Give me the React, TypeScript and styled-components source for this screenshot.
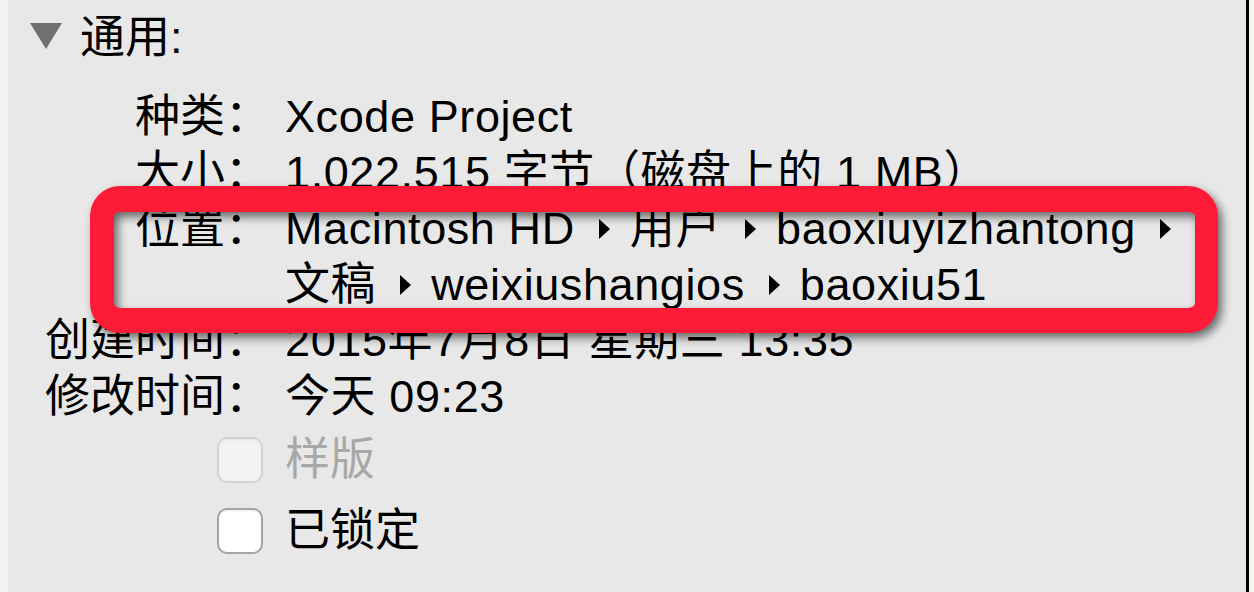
import React from "react";
import styled, { createGlobalStyle } from "styled-components";

const Global = createGlobalStyle`
  html, body { margin: 0; padding: 0; }
  body {
    background: #f4f4f1;
    width: 1254px;
    height: 592px;
    overflow: hidden;
    font-family: "Liberation Sans", "Noto Sans CJK SC", Arial, sans-serif;
  }
`;

const Page = styled.div`
  display: flex;
  width: 1254px;
  height: 592px;
  padding-left: 8px;
  box-sizing: border-box;
`;

const Panel = styled.div`
  position: relative;
  width: 1241px;
  height: 592px;
  background: #e8e8e8;
  border-right: 3px solid #000;
  box-sizing: border-box;
  padding-top: 10px;
  display: flex;
  flex-direction: column;
  color: #000;
  font-size: 45px;
  line-height: 56px;
`;

const Header = styled.div`
  display: flex;
  align-items: center;
  height: 56px;
  padding-left: 22px;
  gap: 18px;
`;

const Disclosure = styled.span`
  width: 0;
  height: 0;
  border-left: 16px solid transparent;
  border-right: 16px solid transparent;
  border-top: 26px solid #707070;
  margin-top: -4px;
`;

const Info = styled.div`
  display: grid;
  grid-template-columns: 262px auto;
  column-gap: 15px;
  margin-top: 23px;
`;

const Label = styled.div`
  text-align: right;
  white-space: nowrap;
`;

const Value = styled.div`
  white-space: nowrap;
  letter-spacing: 0.6px;
`;

const Crumb = styled.span`
  display: inline-block;
  width: 0;
  height: 0;
  border-top: 10px solid transparent;
  border-bottom: 10px solid transparent;
  border-left: 11px solid #000;
  margin: 0 20px 0 24px;
  vertical-align: 5px;
`;

const Checks = styled.div`
  display: flex;
  flex-direction: column;
  gap: 11px;
  margin-top: 5px;
  padding-left: 209px;
`;

const CheckRow = styled.label<{ $disabled?: boolean }>`
  display: flex;
  align-items: center;
  height: 60px;
  gap: 22px;
  color: ${(p) => (p.$disabled ? "#a8a8a8" : "#000")};
`;

const Box = styled.span<{ $disabled?: boolean }>`
  width: 46px;
  height: 46px;
  box-sizing: border-box;
  border-radius: 10px;
  border: 2px solid ${(p) => (p.$disabled ? "#d2d2d2" : "#a6a6a6")};
  background: ${(p) => (p.$disabled ? "#f3f3f3" : "#ffffff")};
  box-shadow: inset 0 1px 2px rgba(0, 0, 0, 0.08);
`;

const Highlight = styled.div`
  position: absolute;
  left: 82px;
  top: 186px;
  width: 1128px;
  height: 147px;
  box-sizing: border-box;
  border: 25px solid #fd1b38;
  border-width: 26px 23px 25px 24px;
  border-radius: 30px;
  filter: drop-shadow(4px 5px 5px rgba(0, 0, 0, 0.55));
  pointer-events: none;
`;

type Row = { label: string; lines: React.ReactNode[] };

const rows: Row[] = [
  { label: "种类：", lines: ["Xcode Project"] },
  { label: "大小：", lines: ["1,022,515 字节（磁盘上的 1 MB）"] },
  {
    label: "位置：",
    lines: [
      <>
        Macintosh HD<Crumb />用户<Crumb />baoxiuyizhantong<Crumb />
      </>,
      <>
        文稿<Crumb />weixiushangios<Crumb />baoxiu51
      </>,
    ],
  },
  { label: "创建时间：", lines: ["2015年7月8日 星期三 13:35"] },
  { label: "修改时间：", lines: ["今天 09:23"] },
];

export default function App() {
  return (
    <>
      <Global />
      <Page>
        <Panel>
          <Header>
            <Disclosure />
            <span>通用:</span>
          </Header>
          <Info>
            {rows.map((r) => (
              <React.Fragment key={r.label}>
                <Label>{r.label}</Label>
                <Value>
                  {r.lines.map((l, i) => (
                    <div key={i}>{l}</div>
                  ))}
                </Value>
              </React.Fragment>
            ))}
          </Info>
          <Checks>
            <CheckRow $disabled>
              <Box $disabled />
              样版
            </CheckRow>
            <CheckRow>
              <Box />
              已锁定
            </CheckRow>
          </Checks>
          <Highlight />
        </Panel>
      </Page>
    </>
  );
}
